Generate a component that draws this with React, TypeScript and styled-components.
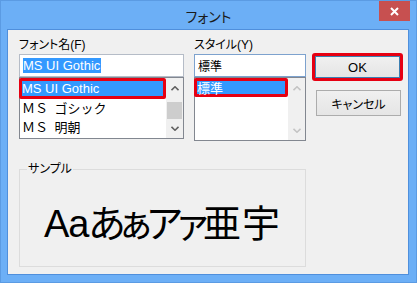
import styled, { createGlobalStyle } from "styled-components";

const GlobalStyle = createGlobalStyle`
  html, body {
    margin: 0;
    padding: 0;
    background: #6caff6;
  }
  body {
    font-family: "Liberation Sans", "Noto Sans CJK JP", sans-serif;
    font-feature-settings: "palt";
    color: #000;
  }
  * {
    box-sizing: border-box;
  }
`;

const Window = styled.div`
  width: 417px;
  height: 283px;
  background: #6caff6;
  border: 1px solid #5b9be3;
  display: flex;
  flex-direction: column;
`;

const TitleBar = styled.div`
  flex: none;
  height: 28px;
  display: grid;
  grid-template-columns: 1fr auto 1fr;
  align-items: start;
`;

const Title = styled.div`
  grid-column: 2;
  padding-top: 8px;
  font-size: 14px;
  line-height: 16px;
  color: #1a1a1a;
`;

const CloseButton = styled.div`
  grid-column: 3;
  justify-self: end;
  width: 31px;
  height: 20px;
  margin-right: 6px;
  background: #c75050;
  display: flex;
  align-items: center;
  justify-content: center;
`;

const Client = styled.div`
  width: 402px;
  height: 246px;
  margin-left: 6px;
  border: 1px solid #4f8fdc;
  background: #f0f0f0;
  padding: 7px 0 0 11px;
  display: flex;
  flex-direction: column;
`;

const TopRow = styled.div`
  display: flex;
  align-items: flex-start;
`;

const Column = styled.div<{ $width: number; $gap?: number; $top?: number }>`
  width: ${(p) => p.$width}px;
  margin-right: ${(p) => p.$gap ?? 0}px;
  padding-top: ${(p) => p.$top ?? 0}px;
  display: flex;
  flex-direction: column;
`;

const FieldLabel = styled.div`
  height: 16px;
  margin-bottom: 1px;
  font-size: 12px;
  line-height: 16px;
  white-space: nowrap;
`;

const TextBox = styled.div<{ $border: string }>`
  height: 23px;
  border: 1px solid ${(p) => p.$border};
  background: #fff;
  padding-left: 3px;
  display: flex;
  align-items: center;
  font-size: 12px;
  white-space: nowrap;
`;

const Selection = styled.span`
  background: #3399ff;
  color: #fff;
  font-size: 13px;
  line-height: 15px;
  padding-right: 1px;
`;

const ListBox = styled.div<{ $height: number }>`
  height: ${(p) => p.$height}px;
  border: 1px solid #828790;
  background: #fff;
  display: flex;
`;

const Items = styled.div`
  flex: 1;
  min-width: 0;
  display: flex;
  flex-direction: column;
`;

const Item = styled.div`
  height: 19px;
  padding-left: 2px;
  font-size: 13px;
  line-height: 19px;
  font-feature-settings: normal;
  word-spacing: 3px;
  white-space: nowrap;
`;

const SelectedItem = styled.div<{ $height: number }>`
  height: ${(p) => p.$height}px;
  margin-left: -1px;
  border: 3px solid #e60012;
  border-radius: 2px;
  background: #3399ff;
  color: #fff;
  font-size: 13px;
  display: flex;
  align-items: center;
  white-space: nowrap;
`;

const ScrollBar = styled.div`
  width: 17px;
  flex: none;
  background: #f0f0f0;
  display: flex;
  flex-direction: column;
`;

const ScrollButton = styled.div<{ $height: number }>`
  height: ${(p) => p.$height}px;
  flex: none;
  display: flex;
  align-items: center;
  justify-content: center;
`;

const Track = styled.div`
  flex: 1;
  display: flex;
  flex-direction: column;
`;

const Thumb = styled.div`
  height: 17px;
  margin: 4px 1px 0;
  background: #cdcdcd;
`;

const OkFrame = styled.div`
  height: 28px;
  border: 3px solid #e60012;
  border-radius: 3px;
  display: flex;
`;

const Button = styled.button<{ $default?: boolean }>`
  flex: 1;
  height: 100%;
  padding: 0;
  border: 1px solid ${(p) => (p.$default ? "#3c7fb1" : "#acacac")};
  background: linear-gradient(#f0f0f0, #e5e5e5);
  font-family: inherit;
  font-feature-settings: "palt";
  font-size: 13px;
  color: #000;
`;

const CancelButton = styled(Button)`
  flex: none;
  width: 85px;
  height: 26px;
  margin: 9px 0 0 4px;
  font-size: 12px;
`;

const SampleGroup = styled.fieldset`
  width: 287px;
  height: 105px;
  margin: 21px 0 0 0;
  padding: 0;
  min-width: 0;
  border: 1px solid #dcdcdc;
`;

const SampleLegend = styled.legend`
  margin-left: 7px;
  padding: 0 1px;
  font-size: 12px;
  line-height: 14px;
`;

const SampleBody = styled.div`
  height: 89px;
  padding-top: 6px;
  display: flex;
  align-items: center;
  justify-content: center;
`;

const SampleText = styled.div`
  font-size: 38px;
  line-height: 38px;
  white-space: nowrap;
`;

const SampleRun = styled.span<{ $spacing: number }>`
  letter-spacing: ${(p) => p.$spacing}px;
`;

const Chevron = ({ down, disabled }: { down?: boolean; disabled?: boolean }) => (
  <svg width="8" height="5" viewBox="0 0 8 5">
    <polyline
      points={down ? "0.5,0.8 4,4.2 7.5,0.8" : "0.5,4.2 4,0.8 7.5,4.2"}
      fill="none"
      stroke={disabled ? "#c4c4c4" : "#606060"}
      strokeWidth="1.6"
    />
  </svg>
);

export default function App() {
  return (
    <>
      <GlobalStyle />
      <Window>
        <TitleBar>
          <Title>フォント</Title>
          <CloseButton>
            <svg width="9" height="9" viewBox="0 0 9 9">
              <path d="M1 1 L8 8 M8 1 L1 8" stroke="#fff" strokeWidth="2" />
            </svg>
          </CloseButton>
        </TitleBar>
        <Client>
          <TopRow>
            <Column $width={165} $gap={10}>
              <FieldLabel>フォント名(F)</FieldLabel>
              <TextBox $border="#b5bcc7">
                <Selection>MS UI Gothic</Selection>
              </TextBox>
              <ListBox $height={62}>
                <Items>
                  <SelectedItem $height={21}>MS UI Gothic</SelectedItem>
                  <Item>ＭＳ ゴシック</Item>
                  <Item>ＭＳ 明朝</Item>
                </Items>
                <ScrollBar>
                  <ScrollButton $height={20}>
                    <Chevron />
                  </ScrollButton>
                  <Track>
                    <Thumb />
                  </Track>
                  <ScrollButton $height={19}>
                    <Chevron down />
                  </ScrollButton>
                </ScrollBar>
              </ListBox>
            </Column>
            <Column $width={112} $gap={6}>
              <FieldLabel>スタイル(Y)</FieldLabel>
              <TextBox $border="#7da2ce">標準</TextBox>
              <ListBox $height={64}>
                <Items>
                  <SelectedItem $height={19}>標準</SelectedItem>
                </Items>
                <ScrollBar>
                  <ScrollButton $height={20}>
                    <Chevron disabled />
                  </ScrollButton>
                  <Track />
                  <ScrollButton $height={20}>
                    <Chevron down disabled />
                  </ScrollButton>
                </ScrollBar>
              </ListBox>
            </Column>
            <Column $width={91} $top={16}>
              <OkFrame>
                <Button $default>OK</Button>
              </OkFrame>
              <CancelButton>キャンセル</CancelButton>
            </Column>
          </TopRow>
          <SampleGroup>
            <SampleLegend>サンプル</SampleLegend>
            <SampleBody>
              <SampleText>
                <SampleRun $spacing={-1}>Aa</SampleRun>
                <SampleRun $spacing={-5}>あぁアァ</SampleRun>
                <SampleRun $spacing={1}>亜宇</SampleRun>
              </SampleText>
            </SampleBody>
          </SampleGroup>
        </Client>
      </Window>
    </>
  );
}
